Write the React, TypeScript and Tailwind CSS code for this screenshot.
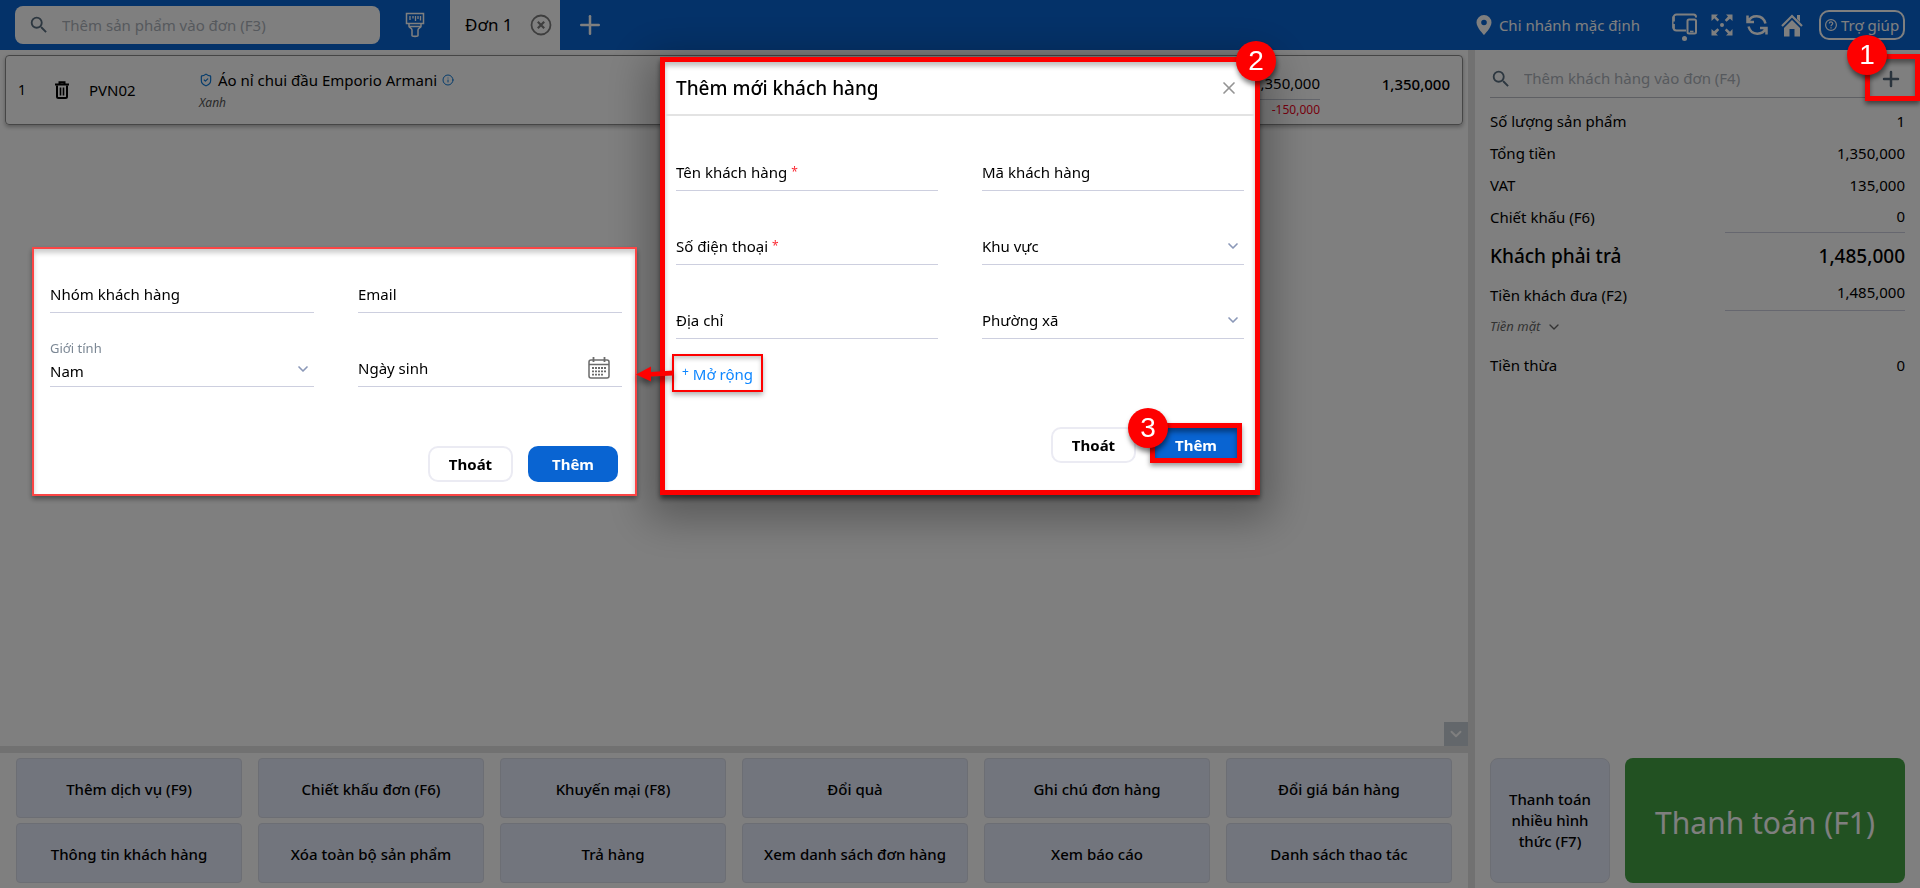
import React from "react";
import { MdSearch } from "react-icons/md";
import { ChevronDown, Info, Plus, ShieldCheck, X } from "lucide-react";

function BrushIcon() {
  return (
    <svg width="20" height="26" viewBox="0 0 20 26" fill="none" stroke="currentColor" strokeWidth="1.5" aria-hidden="true">
      <path d="M1.5 1.5h17v10h-17z" />
      <path d="M5 4v4M8 4v2.5M10.5 4v5M13 4v3M15.500 4v4.500" strokeWidth="1.300" />
      <path d="M4 12v2.500c0 1.500 3 1.500 3 3.500v5.500c0 1.200 6 1.200 6 0v-5.500c0-2 3-2 3-3.500v-2.500M4 14.500h12" />
    </svg>
  );
}

function CloseCircleIcon() {
  return (
    <svg width="22" height="22" viewBox="0 0 22 22" fill="none" stroke="currentColor" aria-hidden="true">
      <circle cx="11" cy="11" r="9.500" strokeWidth="1.800" />
      <path d="M7.800 7.800l6.400 6.400M14.200 7.800l-6.400 6.400" strokeWidth="2.200" />
    </svg>
  );
}

function PinIcon() {
  return (
    <svg width="16" height="20" viewBox="0 0 16 20" fill="currentColor" fillRule="evenodd" aria-hidden="true">
      <path d="M8 0a7.500 7.500 0 0 0-7.500 7.500C.5 12.500 8 20 8 20s7.500-7.500 7.500-12.500A7.500 7.500 0 0 0 8 0zm0 4.700a2.800 2.800 0 1 1 0 5.600 2.800 2.800 0 0 1 0-5.600z" />
    </svg>
  );
}

function DevicesIcon() {
  return (
    <svg width="26" height="28" viewBox="0 0 26 28" fill="none" stroke="currentColor" aria-hidden="true">
      <path d="M24 4.500V4a2.500 2.500 0 0 0-2.500-2.500h-17A3 3 0 0 0 1.500 4.500v10a3 3 0 0 0 3 3H14" strokeWidth="2" />
      <path d="M1.500 3.500v12" strokeWidth="2.500" />
      <path d="M2.300 8.500v2.500" stroke="#0964d2" strokeWidth="1.500" />
      <rect x="15.500" y="6.500" width="8.500" height="14" rx="1.500" strokeWidth="2" />
      <path d="M18 18.500h3.500" strokeWidth="1.600" />
      <circle cx="12.500" cy="25.500" r="2.500" fill="currentColor" stroke="none" />
    </svg>
  );
}

function ExpandIcon() {
  return (
    <svg width="22" height="22" viewBox="0 0 22 22" aria-hidden="true">
      <g fill="currentColor">
        <path d="M.5.500h6.500l-2 2 3.200 3.200-1.700 1.700-3.200-3.200L.500 7z" />
        <path d="M21.500.500v6.500l-2.500-2.300-3.500 3-1.700-1.700 3.200-3.500-2-2z" />
        <path d="M21.500 21.500h-6.500l2-2-3.200-3.200 1.700-1.700 3.500 3.200 2.500-2.800z" />
        <path d="M.500 21.500v-6.500l2.500 2.300 3.500-3 1.700 1.700-3.200 3.500 2 2z" />
        <circle cx="11" cy="11" r="2" />
      </g>
    </svg>
  );
}

function RefreshIcon() {
  return (
    <svg width="22" height="22" viewBox="0 0 22 22" fill="none" stroke="currentColor" strokeWidth="2.500" aria-hidden="true">
      <path d="M1.500 1.500v6.500h6.500M2.500 7.500C5 1 16.500-.5 19.500 9.500" />
      <path d="M20.500 20.500v-6.500H14M19.500 14.500C17 21 5.500 22.500 2.500 12.500" />
    </svg>
  );
}

function HomeIcon() {
  return (
    <svg width="22" height="23" viewBox="0 0 22 23" aria-hidden="true">
      <path d="M1 12L11 2l10 10" fill="none" stroke="currentColor" strokeWidth="2.200" />
      <path d="M16 1h3v7l-3-3z" fill="currentColor" />
      <path d="M11 6l8 8v8.500h-5.500V15h-5v7.500H3V14z" fill="currentColor" />
    </svg>
  );
}

function TrashIcon() {
  return (
    <svg width="14" height="18" viewBox="0 0 14 18" fill="none" stroke="currentColor" aria-hidden="true">
      <path d="M0 3.500h14M4.500 3V1.200h5V3" strokeWidth="2" />
      <path d="M2 4.500V15.500a1.500 1.500 0 0 0 1.500 1.500h7a1.500 1.500 0 0 0 1.500-1.500V4.500" strokeWidth="2" />
      <path d="M5.500 6.500v8M8.500 6.500v8" strokeWidth="1.600" />
    </svg>
  );
}

function CalendarIcon() {
  return (
    <svg width="22" height="22" viewBox="0 0 22 22" fill="none" stroke="currentColor" aria-hidden="true">
      <rect x="1" y="3" width="20" height="18" rx="2" strokeWidth="1.500" />
      <path d="M1 7.500h20" strokeWidth="1.500" />
      <path d="M5.500 0v5M16.500 0v5" strokeWidth="1.800" />
      <path d="M4 11h14M4 14.300h14M4 17.600h11" strokeWidth="1.800" strokeDasharray="2 1" />
    </svg>
  );
}

type FieldProps = {
  label: string;
  required?: boolean;
  select?: boolean;
  icon?: React.ReactNode;
};

function Field({ label, required, select, icon }: FieldProps) {
  return (
    <label className="flex h-12 items-center gap-1 border-b border-[#cdcfdf] pt-[11px]">
      <span className="shrink-0">
        {label}
        {required && <span className="ml-1 align-[2px] text-xs text-red-500">*</span>}
      </span>
      {select ? (
        <select className="h-6 min-w-0 flex-1 appearance-none bg-transparent outline-none" />
      ) : (
        <input className="h-6 min-w-0 flex-1 bg-transparent outline-none" />
      )}
      {select && <ChevronDown className="mr-[3px] size-4 text-[#8b98b8]" strokeWidth={2.5} />}
      {icon}
    </label>
  );
}

function Badge({ children, className }: { children: string; className: string }) {
  return (
    <span
      className={`absolute z-10 flex size-10 items-center justify-center rounded-full bg-[#fe0000] font-['Liberation_Sans',sans-serif] text-[28px] text-white shadow-[1px_4px_5px_rgba(0,0,0,0.5)] ${className}`}
    >
      {children}
    </span>
  );
}

const actions = [
  "Thêm dịch vụ (F9)",
  "Chiết khấu đơn (F6)",
  "Khuyến mại (F8)",
  "Đổi quà",
  "Ghi chú đơn hàng",
  "Đổi giá bán hàng",
  "Thông tin khách hàng",
  "Xóa toàn bộ sản phẩm",
  "Trả hàng",
  "Xem danh sách đơn hàng",
  "Xem báo cáo",
  "Danh sách thao tác",
];

const totals = [
  ["Số lượng sản phẩm", "1"],
  ["Tổng tiền", "1,350,000"],
  ["VAT", "135,000"],
];

function Header() {
  return (
    <header className="flex h-[50px] items-center bg-[#0964d2] text-white">
      <label className="ml-[15px] flex h-[38px] w-[365px] items-center gap-3 rounded-lg bg-white pl-[13px]">
        <MdSearch className="size-[22px] text-[#5a6f80]" />
        <input
          aria-label="Thêm sản phẩm vào đơn"
          placeholder="Thêm sản phẩm vào đơn (F3)"
          className="min-w-0 flex-1 bg-transparent outline-none placeholder:text-[#adb3bb]"
        />
      </label>
      <button aria-label="Dọn đơn" className="ml-[25px]">
        <BrushIcon />
      </button>
      <div className="ml-[25px] flex h-full w-[110px] items-center justify-between bg-white pr-2 pl-[15px] text-black">
        <span className="text-[17px]">Đơn 1</span>
        <button aria-label="Đóng đơn" className="text-[#7d7d7d]">
          <CloseCircleIcon />
        </button>
      </div>
      <button aria-label="Thêm đơn" className="ml-[15px]">
        <Plus className="size-[30px]" strokeWidth={2} />
      </button>
      <div className="mr-[15px] ml-auto flex items-center">
        <PinIcon />
        <span className="ml-[7px]">Chi nhánh mặc định</span>
        <div className="ml-8 flex items-center gap-[13px]">
          <button aria-label="Thiết bị" className="mt-1">
            <DevicesIcon />
          </button>
          <button aria-label="Toàn màn hình">
            <ExpandIcon />
          </button>
          <button aria-label="Làm mới">
            <RefreshIcon />
          </button>
          <button aria-label="Trang chủ">
            <HomeIcon />
          </button>
        </div>
        <button className="ml-4 flex h-[30px] w-[86px] items-center justify-center gap-1 rounded-[10px] border-2 border-white whitespace-nowrap">
          <svg width="12" height="12" viewBox="0 0 12 12" fill="none" stroke="currentColor" strokeWidth="1.200" aria-hidden="true">
            <circle cx="6" cy="6" r="5.400" />
            <path d="M4.300 4.600c0-2.200 3.400-2.200 3.400 0C7.700 5.800 6 5.800 6 7.300M6 8.200v1.200" />
          </svg>
          Trợ giúp
        </button>
      </div>
    </header>
  );
}

function ProductRow() {
  return (
    <article className="mx-[5px] mt-[5px] flex h-[70px] items-center rounded border border-[#8c8c8c] px-3 shadow-[0_2px_4px_rgba(0,0,0,0.3)]">
      <span className="w-[37px] text-sm">1</span>
      <button aria-label="Xóa sản phẩm">
        <TrashIcon />
      </button>
      <span className="ml-5 w-[110px]">PVN02</span>
      <div className="flex-1">
        <div className="flex items-center gap-[5px]">
          <ShieldCheck className="size-[14px] text-[#0b78d8]" />
          <span>Áo nỉ chui đầu Emporio Armani</span>
          <Info className="size-3 text-[#0b78d8]" />
        </div>
        <div className="mt-1 text-xs text-[#555] italic">Xanh</div>
      </div>
      <div className="mt-3 w-[100px] text-right">
        <div className="border-b border-[#c4c8d4] pb-1">1,350,000</div>
        <div className="text-xs leading-5 text-[#f00020]">-150,000</div>
      </div>
      <div className="mb-3 w-[130px] text-right font-medium">1,350,000</div>
    </article>
  );
}

function Summary() {
  return (
    <aside className="flex w-[445px] shrink-0 flex-col px-[15px]">
      <div className="-mr-[15px] flex h-12 items-center border-b border-[#bdbfc6] pt-2.5">
        <label className="flex flex-1 items-center gap-3">
          <MdSearch className="size-[22px] text-[#5a6f80]" />
          <input
            aria-label="Thêm khách hàng vào đơn"
            placeholder="Thêm khách hàng vào đơn (F4)"
            className="min-w-0 flex-1 bg-transparent outline-none placeholder:text-[#adb3bb]"
          />
        </label>
        <button aria-label="Thêm khách hàng" className="mr-[17px]">
          <Plus className="size-6 text-[#54687a]" strokeWidth={2.5} />
        </button>
      </div>
      <dl className="mt-[7px]">
        {totals.map(([k, v]) => (
          <div key={k} className="flex h-8 items-center justify-between">
            <dt>{k}</dt>
            <dd>{v}</dd>
          </div>
        ))}
        <div className="flex h-8 items-center justify-between">
          <dt>Chiết khấu (F6)</dt>
          <dd className="flex h-full w-[180px] items-center justify-end border-b border-[#cdcfdf]">0</dd>
        </div>
        <div className="flex h-[46px] items-center justify-between text-[19px] font-medium">
          <dt>Khách phải trả</dt>
          <dd>1,485,000</dd>
        </div>
        <div className="flex h-8 items-center justify-between">
          <dt>Tiền khách đưa (F2)</dt>
          <dd className="flex h-full w-[180px] items-center justify-end border-b border-[#cdcfdf] pb-1">1,485,000</dd>
        </div>
      </dl>
      <button className="flex h-8 items-center gap-1.5 text-[13px] text-[#666] italic">
        Tiền mặt
        <ChevronDown className="size-4" />
      </button>
      <dl className="mt-[6px] flex h-8 items-center justify-between">
        <dt>Tiền thừa</dt>
        <dd>0</dd>
      </dl>
      <div className="mt-auto mb-[5px] flex h-[125px] gap-[15px]">
        <button className="w-[120px] rounded-lg border border-[#d9dde8] bg-[#e4eafa] px-4 leading-[21px] font-medium">
          Thanh toán nhiều hình thức (F7)
        </button>
        <button className="flex-1 rounded-lg bg-[#44a345] pt-1 text-[30px] text-white">Thanh toán (F1)</button>
      </div>
    </aside>
  );
}

function ExtraPanel() {
  return (
    <section className="absolute top-[185px] right-[618px] w-[605px] border-2 border-[#fb4545] bg-white pt-4 pr-[13px] pb-3 pl-4 shadow-[0_3px_5px_rgba(0,0,0,0.4),inset_0_4px_5px_rgba(0,0,0,0.2)]">
      <div className="grid grid-cols-2 gap-x-11 gap-y-[26px]">
        <Field label="Nhóm khách hàng" />
        <Field label="Email" />
        <label className="relative flex h-12 items-end border-b border-[#cdcfdf] pb-[3px]">
          <span className="absolute top-0 left-0 text-[13px] text-[#7b8794]">Giới tính</span>
          <select className="h-6 min-w-0 flex-1 appearance-none bg-transparent outline-none">
            <option>Nam</option>
            <option>Nữ</option>
          </select>
          <ChevronDown className="mr-[3px] mb-[6px] size-4 text-[#8b98b8]" strokeWidth={2.5} />
        </label>
        <Field label="Ngày sinh" icon={<span className="mr-3 text-[#6b6b6b]"><CalendarIcon /></span>} />
      </div>
      <div className="mt-[59px] mr-1 flex justify-end gap-[15px]">
        <button className="h-9 w-[85px] rounded-[10px] border-2 border-[#ebebf3] font-bold">Thoát</button>
        <button className="h-9 w-[90px] rounded-[10px] bg-[#0964d2] font-bold text-white">Thêm</button>
      </div>
    </section>
  );
}

function CustomerDialog() {
  return (
    <div
      role="dialog"
      aria-label="Thêm mới khách hàng"
      className="relative w-[600px] border-[5px] border-[#fe0000] bg-white shadow-[0_4px_5px_rgba(0,0,0,0.5),0_12px_40px_12px_rgba(0,0,0,0.3),inset_0_4px_5px_rgba(0,0,0,0.25)]"
    >
      <Badge className="-top-[21px] -right-[21px]">2</Badge>
      <div className="flex h-[54px] items-center justify-between border-b-2 border-[#e3e3e3] pr-4 pl-[11px]">
        <h2 className="text-[19px] font-medium">Thêm mới khách hàng</h2>
        <button aria-label="Đóng" className="text-[#949494]">
          <X className="size-5" strokeWidth={2} />
        </button>
      </div>
      <div className="px-[11px] pt-[27px] pb-[27px]">
        <div className="grid grid-cols-2 gap-x-11 gap-y-[26px]">
          <Field label="Tên khách hàng" required />
          <Field label="Mã khách hàng" />
          <Field label="Số điện thoại" required />
          <Field label="Khu vực" select />
          <Field label="Địa chỉ" />
          <Field label="Phường xã" select />
        </div>
        <button className="mt-[15px] -ml-1 flex h-[38px] w-[91px] items-center justify-center gap-1 border-2 border-[#fe0000] pt-0.5 text-[#0d86ff] shadow-[0_3px_5px_rgba(0,0,0,0.3),inset_0_3px_4px_rgba(0,0,0,0.2)]">
          <span className="pb-1 text-xs">+</span>Mở rộng
        </button>
        <div className="mt-[31px] flex items-end justify-end gap-[14px]">
          <button className="h-9 w-[85px] rounded-[10px] border-2 border-[#ebebf3] font-bold">Thoát</button>
          <div className="relative mr-[2px]">
            <Badge className="-top-[15px] -left-[22px]">3</Badge>
            <button className="flex h-10 w-[92px] items-center justify-center border-[5px] border-[#fe0000] bg-[#0964d2] pt-1 font-bold text-white shadow-[0_3px_5px_rgba(0,0,0,0.4),inset_0_4px_5px_rgba(0,0,0,0.4)]">
              Thêm
            </button>
          </div>
        </div>
      </div>
      <ExtraPanel />
      <svg
        className="absolute top-[302px] -left-[29px] drop-shadow-[0_4px_3px_rgba(0,0,0,0.5)]"
        width="38"
        height="20"
        viewBox="0 0 38 20"
        aria-hidden="true"
      >
        <path d="M0 10.500L15 2.500v5.500l22-1.500v5l-22 1v5z" fill="#fe0000" />
      </svg>
    </div>
  );
}

export default function App() {
  return (
    <div className="flex min-h-screen flex-col bg-white font-['Noto_Sans',sans-serif] text-[15px] text-black">
      <Header />
      <div className="flex flex-1">
        <main className="flex min-w-0 flex-1 flex-col">
          <ProductRow />
          <button
            aria-label="Cuộn xuống"
            className="mt-auto ml-auto flex size-6 items-center justify-center bg-[#c6cfd6] text-white"
          >
            <ChevronDown className="size-[18px]" strokeWidth={2.5} />
          </button>
          <div className="grid grid-cols-6 gap-x-4 gap-y-[5px] border-t-[7px] border-[#e2e2e2] px-4 py-[5px]">
            {actions.map((a) => (
              <button key={a} className="h-[60px] rounded border border-[#d9dde8] bg-[#e4eafa] pt-0.5 font-medium">
                {a}
              </button>
            ))}
          </div>
        </main>
        <div className="w-[7px] bg-[#e2e2e2]" />
        <Summary />
      </div>
      <div className="fixed inset-0 flex items-start justify-center bg-black/50 pt-[57px]">
        <CustomerDialog />
        <div className="absolute top-[54px] right-0 h-[47px] w-[55px] border-[5px] border-[#fe0000] shadow-[0_3px_5px_rgba(0,0,0,0.5),inset_0_4px_5px_rgba(0,0,0,0.4)]">
          <Badge className="-top-6 -left-[23px]">1</Badge>
        </div>
      </div>
    </div>
  );
}
